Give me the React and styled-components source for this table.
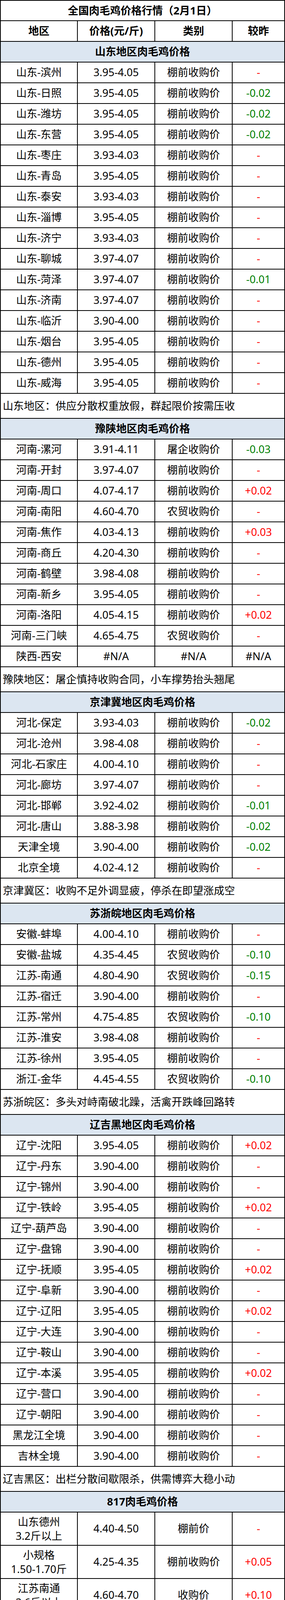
import React from "react";
import styled, { createGlobalStyle } from "styled-components";

const GlobalStyle = createGlobalStyle`
  body {
    margin: 0;
    background: #fff;
    font-family: "Noto Sans", "Noto Sans CJK SC", sans-serif;
  }
`;

const Sheet = styled.div`
  width: 729px;
  box-sizing: border-box;
  display: flex;
  flex-direction: column;
  gap: 2px;
  padding: 2px;
  background: #000;
  color: #000;
  font-size: 27px;
  line-height: 1.2;
`;

const Row = styled.div`
  flex: none;
  height: ${(p) => p.$h}px;
  display: grid;
  grid-template-columns: ${(p) => (p.$full ? "1fr" : "195px 196px 196px 132px")};
  gap: 2px;
  overflow: hidden;
`;

const Cell = styled.div`
  position: relative;
  min-width: 0;
  overflow: hidden;
  background: #fff;
  display: flex;
  align-items: center;
  justify-content: center;
  text-align: center;
  white-space: nowrap;
`;

const TitleCell = styled(Cell)`
  font-weight: bold;
`;

const HeadCell = styled(Cell)`
  font-weight: bold;
`;

const SectionCell = styled(Cell)`
  background: #dce6f1;
  font-weight: bold;
`;

const NoteCell = styled(Cell)`
  justify-content: flex-start;
  padding-left: 5px;
`;

const TwoLine = styled.span`
  line-height: 36px;
  white-space: pre-line;
`;

const ChangeCell = styled(Cell)`
  color: ${(p) => p.$color};
`;

const ErrorMark = styled.span`
  position: absolute;
  top: 0;
  left: 0;
  width: 0;
  height: 0;
  border-top: 5px solid #1e8c2f;
  border-right: 5px solid transparent;
`;

const BUY = "棚前收购价";
const FARM = "农贸收购价";

const sections = [
  {
    title: "山东地区肉毛鸡价格",
    rows: [
      ["山东-滨州", "3.95-4.05", BUY, "-"],
      ["山东-日照", "3.95-4.05", BUY, "-0.02"],
      ["山东-潍坊", "3.95-4.05", BUY, "-0.02"],
      ["山东-东营", "3.95-4.05", BUY, "-0.02"],
      ["山东-枣庄", "3.93-4.03", BUY, "-"],
      ["山东-青岛", "3.95-4.05", BUY, "-"],
      ["山东-泰安", "3.93-4.03", BUY, "-"],
      ["山东-淄博", "3.95-4.05", BUY, "-"],
      ["山东-济宁", "3.93-4.03", BUY, "-"],
      ["山东-聊城", "3.97-4.07", BUY, "-"],
      ["山东-菏泽", "3.97-4.07", BUY, "-0.01"],
      ["山东-济南", "3.97-4.07", BUY, "-"],
      ["山东-临沂", "3.90-4.00", BUY, "-"],
      ["山东-烟台", "3.95-4.05", BUY, "-"],
      ["山东-德州", "3.95-4.05", BUY, "-"],
      ["山东-威海", "3.95-4.05", BUY, "-"],
    ],
    note: "山东地区：供应分散权重放假，群起限价按需压收",
  },
  {
    title: "豫陕地区肉毛鸡价格",
    rows: [
      ["河南-漯河", "3.91-4.11", "屠企收购价", "-0.03"],
      ["河南-开封", "3.97-4.07", BUY, "-"],
      ["河南-周口", "4.07-4.17", BUY, "+0.02"],
      ["河南-南阳", "4.60-4.70", FARM, "-"],
      ["河南-焦作", "4.03-4.13", BUY, "+0.03"],
      ["河南-商丘", "4.20-4.30", BUY, "-"],
      ["河南-鹤壁", "3.98-4.08", BUY, "-"],
      ["河南-新乡", "3.95-4.05", BUY, "-"],
      ["河南-洛阳", "4.05-4.15", BUY, "+0.02"],
      ["河南-三门峡", "4.65-4.75", FARM, "-"],
      ["陕西-西安", "#N/A", "#N/A", "#N/A"],
    ],
    note: "豫陕地区：屠企慎持收购合同，小车撑势抬头翘尾",
  },
  {
    title: "京津冀地区肉毛鸡价格",
    rows: [
      ["河北-保定", "3.93-4.03", BUY, "-0.02"],
      ["河北-沧州", "3.98-4.08", BUY, "-"],
      ["河北-石家庄", "4.00-4.10", BUY, "-"],
      ["河北-廊坊", "3.97-4.07", BUY, "-"],
      ["河北-邯郸", "3.92-4.02", BUY, "-0.01"],
      ["河北-唐山", "3.88-3.98", BUY, "-0.02"],
      ["天津全境", "3.90-4.00", BUY, "-0.02"],
      ["北京全境", "4.02-4.12", BUY, "-"],
    ],
    note: "京津冀区：收购不足外调显疲，停杀在即望涨成空",
  },
  {
    title: "苏浙皖地区肉毛鸡价格",
    rows: [
      ["安徽-蚌埠", "4.00-4.10", BUY, "-"],
      ["安徽-盐城", "4.35-4.45", FARM, "-0.10"],
      ["江苏-南通", "4.80-4.90", FARM, "-0.15"],
      ["江苏-宿迁", "3.90-4.00", BUY, "-"],
      ["江苏-常州", "4.75-4.85", FARM, "-0.10"],
      ["江苏-淮安", "3.98-4.08", BUY, "-"],
      ["江苏-徐州", "3.95-4.05", BUY, "-"],
      ["浙江-金华", "4.45-4.55", FARM, "-0.10"],
    ],
    note: "苏浙皖区：多头对峙南破北躁，活禽开跌峰回路转",
  },
  {
    title: "辽吉黑地区肉毛鸡价格",
    rows: [
      ["辽宁-沈阳", "3.95-4.05", BUY, "+0.02"],
      ["辽宁-丹东", "3.90-4.00", BUY, "-"],
      ["辽宁-锦州", "3.90-4.00", BUY, "-"],
      ["辽宁-铁岭", "3.95-4.05", BUY, "+0.02"],
      ["辽宁-葫芦岛", "3.90-4.00", BUY, "-"],
      ["辽宁-盘锦", "3.90-4.00", BUY, "-"],
      ["辽宁-抚顺", "3.95-4.05", BUY, "+0.02"],
      ["辽宁-阜新", "3.90-4.00", BUY, "-"],
      ["辽宁-辽阳", "3.95-4.05", BUY, "+0.02"],
      ["辽宁-大连", "3.90-4.00", BUY, "-"],
      ["辽宁-鞍山", "3.90-4.00", BUY, "-"],
      ["辽宁-本溪", "3.95-4.05", BUY, "+0.02"],
      ["辽宁-营口", "3.90-4.00", BUY, "-"],
      ["辽宁-朝阳", "3.90-4.00", BUY, "-"],
      ["黑龙江全境", "3.90-4.00", BUY, "-"],
      ["吉林全境", "3.90-4.00", BUY, "-"],
    ],
    note: "辽吉黑区：出栏分散间歇限杀，供需博弈大稳小动",
  },
  {
    title: "817肉毛鸡价格",
    tall: true,
    rows: [
      ["山东德州\n3.2斤以上", "4.40-4.50", "棚前价", "-"],
      ["小规格\n1.50-1.70斤", "4.25-4.35", BUY, "+0.05"],
      ["江苏南通\n3.6斤以上", "4.60-4.70", "收购价", "+0.10"],
      ["山东聊城\n2.8-3.2斤", "4.45-4.55", BUY, "-"],
      ["浙江金华\n3.6斤以上", "4.45-4.55", FARM, "-0.10"],
      ["河南濮阳\n3.2-3.5斤", "4.85-4.95", BUY, "+0.05"],
      ["河南新乡\n3.2-3.5斤", "4.70-4.80", BUY, "+0.10"],
      ["河南开封\n3.2-3.5斤", "4.90-5.00", BUY, "+0.05"],
      ["津冀地区\n2.8-3.2斤", "#N/A", "#N/A", "#N/A", true],
    ],
    note: "肉杂817鸡市场棚前行情：扛价惜售，抬头向上",
  },
];

function changeColor(v) {
  if (v === "#N/A") return "#000";
  if (v.startsWith("-") && v.length > 1) return "#008000";
  return "#ff0000";
}

const DataRow = ({ row, tall }) => {
  const [area, price, kind, change, flagged] = row;
  return (
    <Row $h={tall ? 83 : 51}>
      <Cell>{tall ? <TwoLine>{area}</TwoLine> : area}</Cell>
      <Cell>
        {flagged && <ErrorMark />}
        {price}
      </Cell>
      <Cell>
        {flagged && <ErrorMark />}
        {kind}
      </Cell>
      <ChangeCell $color={changeColor(change)}>
        {flagged && <ErrorMark />}
        {change}
      </ChangeCell>
    </Row>
  );
};

export default function App() {
  return (
    <>
      <GlobalStyle />
      <Sheet>
        <Row $h={50} $full>
          <TitleCell>全国肉毛鸡价格行情（2月1日）</TitleCell>
        </Row>
        <Row $h={51}>
          <HeadCell>地区</HeadCell>
          <HeadCell>价格(元/斤)</HeadCell>
          <HeadCell>类别</HeadCell>
          <HeadCell>较昨</HeadCell>
        </Row>
        {sections.map((s) => (
          <React.Fragment key={s.title}>
            <Row $h={51} $full>
              <SectionCell>{s.title}</SectionCell>
            </Row>
            {s.rows.map((r) => (
              <DataRow key={r[0]} row={r} tall={s.tall} />
            ))}
            <Row $h={62} $full>
              <NoteCell>{s.note}</NoteCell>
            </Row>
          </React.Fragment>
        ))}
      </Sheet>
    </>
  );
}
